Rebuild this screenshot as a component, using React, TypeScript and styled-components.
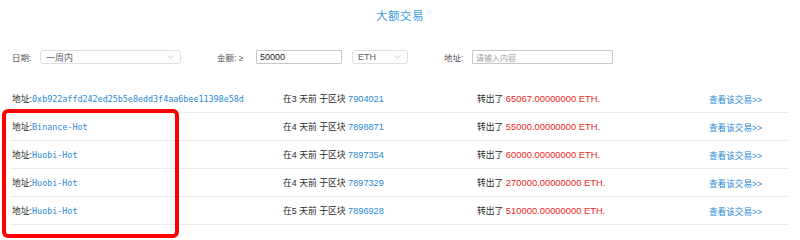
import React from "react";
import styled, { createGlobalStyle } from "styled-components";

const Global = createGlobalStyle`
  html, body { margin: 0; padding: 0; background: #fff; }
  body { font-family: "Liberation Sans", "Noto Sans CJK SC", sans-serif; color: #333; }
`;

const Page = styled.div`
  position: relative;
  width: 800px;
  height: 240px;
  overflow: hidden;
`;

const Title = styled.h1`
  margin: 0;
  padding-top: 8px;
  height: 34px;
  box-sizing: border-box;
  text-align: center;
  font-size: 11.5px;
  font-weight: normal;
  line-height: 16px;
  color: #3d9be0;
  letter-spacing: 0.5px;
`;

const Filters = styled.div`
  display: flex;
  align-items: center;
  height: 28px;
  margin-top: 9px;
  padding-left: 12px;
  font-size: 8.5px;
  color: #555;
`;

const Label = styled.span<{ $w: number }>`
  width: ${(p) => p.$w}px;
  flex: none;
  white-space: nowrap;
`;

const SelectBox = styled.div<{ $w: number; $gap: number }>`
  width: ${(p) => p.$w}px;
  margin-right: ${(p) => p.$gap}px;
  height: 14px;
  box-sizing: border-box;
  border: 1px solid #dcdfe6;
  border-radius: 3px;
  display: flex;
  align-items: center;
  justify-content: space-between;
  padding: 0 6px 0 5px;
  font-size: 9px;
  color: #606266;
  flex: none;
`;

const InputBox = styled.div<{ $w: number; $gap: number; $placeholder?: boolean }>`
  width: ${(p) => p.$w}px;
  margin-right: ${(p) => p.$gap}px;
  height: 14px;
  box-sizing: border-box;
  border: 1px solid #c8c8c8;
  border-radius: 1px;
  display: flex;
  align-items: center;
  padding: 0 3px;
  font-size: ${(p) => (p.$placeholder ? "8px" : "9px")};
  color: ${(p) => (p.$placeholder ? "#a0a0a0" : "#222")};
  flex: none;
`;

const Chevron = () => (
  <svg width="7" height="4" viewBox="0 0 7 4">
    <path d="M0.5 0.5 L3.5 3.3 L6.5 0.5" fill="none" stroke="#c0c4cc" strokeWidth="0.8" />
  </svg>
);

const Table = styled.div`
  margin: 14px 12px 0 10px;
`;

const Row = styled.div`
  display: grid;
  grid-template-columns: 271px 194px 232px 1fr;
  align-items: center;
  height: 28px;
  box-sizing: border-box;
  padding-left: 2px;
  border-bottom: 1px solid #ececec;
  font-size: 8.8px;
  color: #2a2a2a;
  white-space: nowrap;
`;

const Mono = styled.span`
  font-family: "DejaVu Sans Mono", monospace;
  font-size: 8.4px;
  color: #2b8ad4;
`;

const Blue = styled.span`
  color: #2b8ad4;
  font-size: 9.2px;
`;

const Red = styled.span`
  color: #ee1c25;
  font-size: 9.4px;
`;

const Link = styled.a`
  color: #2b8ad4;
  font-size: 8.6px;
  text-decoration: none;
`;

const Highlight = styled.div`
  position: absolute;
  left: 2px;
  top: 109px;
  width: 177px;
  height: 129px;
  box-sizing: border-box;
  border: 4px solid #ff0000;
  border-radius: 6px;
  pointer-events: none;
`;

const rows = [
  { addr: "0xb922affd242ed25b5e8edd3f4aa6bee11398e58d", days: 3, block: "7904021", amount: "65067.00000000" },
  { addr: "Binance-Hot", days: 4, block: "7898871", amount: "55000.00000000" },
  { addr: "Huobi-Hot", days: 4, block: "7897354", amount: "60000.00000000" },
  { addr: "Huobi-Hot", days: 4, block: "7897329", amount: "270000.00000000" },
  { addr: "Huobi-Hot", days: 5, block: "7896928", amount: "510000.00000000" },
];

export default function App() {
  return (
    <Page>
      <Global />
      <Title>大额交易</Title>
      <Filters>
        <Label $w={28}>日期:</Label>
        <SelectBox $w={141} $gap={36}>
          <span>一周内</span>
          <Chevron />
        </SelectBox>
        <Label $w={39}>金额: ≥</Label>
        <InputBox $w={86} $gap={10}>50000</InputBox>
        <SelectBox $w={56} $gap={36}>
          <span>ETH</span>
          <Chevron />
        </SelectBox>
        <Label $w={28}>地址:</Label>
        <InputBox $w={141} $gap={0} $placeholder>请输入内容</InputBox>
      </Filters>
      <Table>
        {rows.map((r, i) => (
          <Row key={i}>
            <span>
              地址:<Mono>{r.addr}</Mono>
            </span>
            <span>
              在{r.days} 天前 于区块 <Blue>{r.block}</Blue>
            </span>
            <span>
              转出了 <Red>{r.amount} ETH.</Red>
            </span>
            <Link href="#">查看该交易&gt;&gt;</Link>
          </Row>
        ))}
      </Table>
      <Highlight />
    </Page>
  );
}
